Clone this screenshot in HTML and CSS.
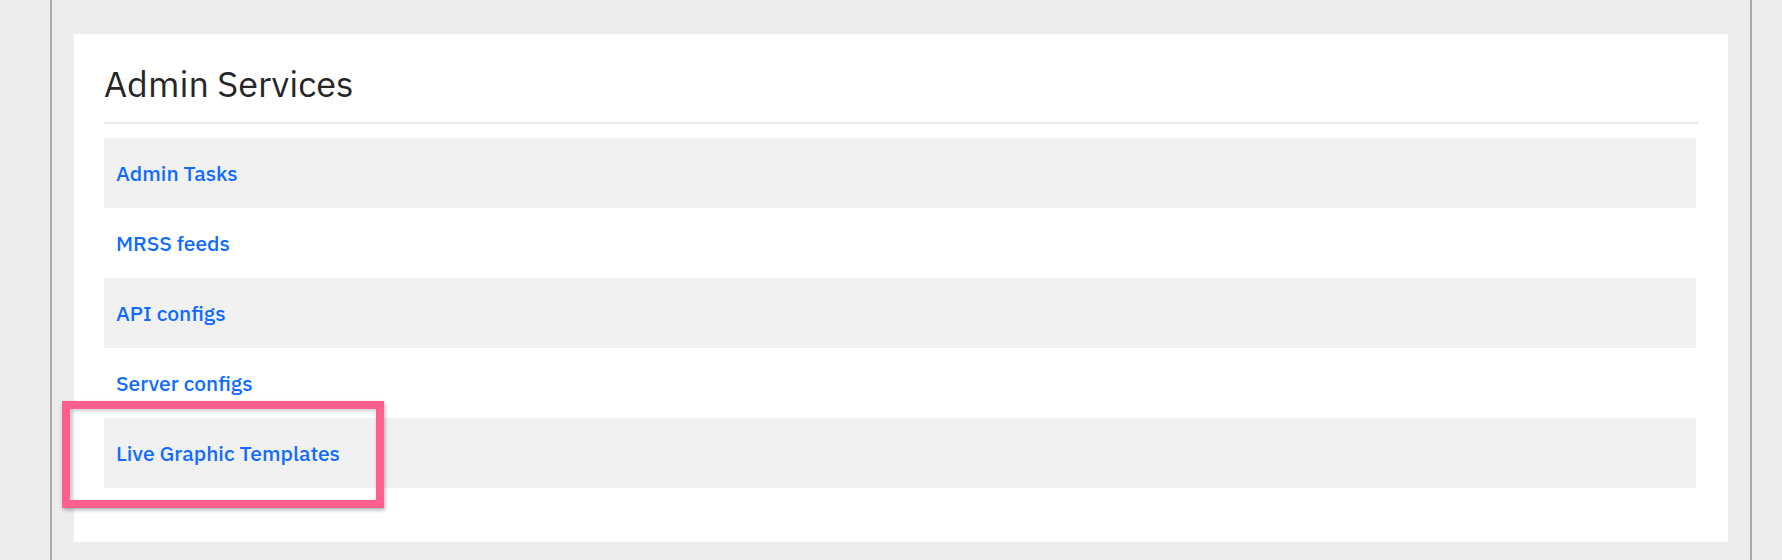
FILE: index.html
```html
<!DOCTYPE html>
<html lang="en">
  <head>
    <meta charset="UTF-8" />
    <meta name="viewport" content="width=device-width, initial-scale=1.0" />
    <title>Admin Services</title>
    <link rel="stylesheet" href="styles.css">
  </head>
  <body>
    <div class="page">
      <div class="panel">
        <h1 class="title">Admin Services</h1>
        <ul class="services">
          <li><a href="#">Admin Tasks</a></li>
          <li><a href="#">MRSS feeds</a></li>
          <li><a href="#">API configs</a></li>
          <li><a href="#">Server configs</a></li>
          <li class="marked">
            <a href="#">Live Graphic Templates</a>
            <span class="highlight"></span>
          </li>
        </ul>
      </div>
    </div>
  </body>
</html>
```

FILE: styles.css
```css
body {
  margin: 0;
  background-color: #ededed;
  font-family: "IBM Plex Sans", Roboto, "Liberation Sans", sans-serif;
}
.page {
  margin-left: 50px;
  width: 1702px;
  height: 560px;
  border-left: 2px solid #aaaaaa;
  border-right: 2px solid #aaaaaa;
  padding: 34px 22px 0 22px;
  box-sizing: border-box;
}
.panel {
  background-color: #fff;
  padding: 0 30px 54px 30px;
}
.title {
  margin: 0;
  padding-top: 28px;
  height: 60px;
  font-size: 36px;
  font-weight: 400;
  line-height: 44px;
  color: #262626;
  border-bottom: 2px solid #e8e8e8;
  margin-bottom: 14px;
}
.services {
  list-style: none;
  margin: 0 2px 0 0;
  padding: 0;
}
.services li {
  height: 70px;
  display: flex;
  align-items: center;
  padding-left: 12px;
}
.services li:nth-child(odd) {
  background-color: #f1f1f1;
}
.services a {
  color: #0f6bff;
  text-decoration: none;
  font-size: 21px;
  font-weight: 500;
}
.marked {
  position: relative;
}
.highlight {
  position: absolute;
  left: -42px;
  top: -17px;
  width: 306px;
  height: 91px;
  border: 8px solid #ff5f8f;
  box-shadow: 1px 2px 4px rgba(0, 0, 0, 0.3), inset 1px 2px 4px rgba(0, 0, 0, 0.2);
}
```
